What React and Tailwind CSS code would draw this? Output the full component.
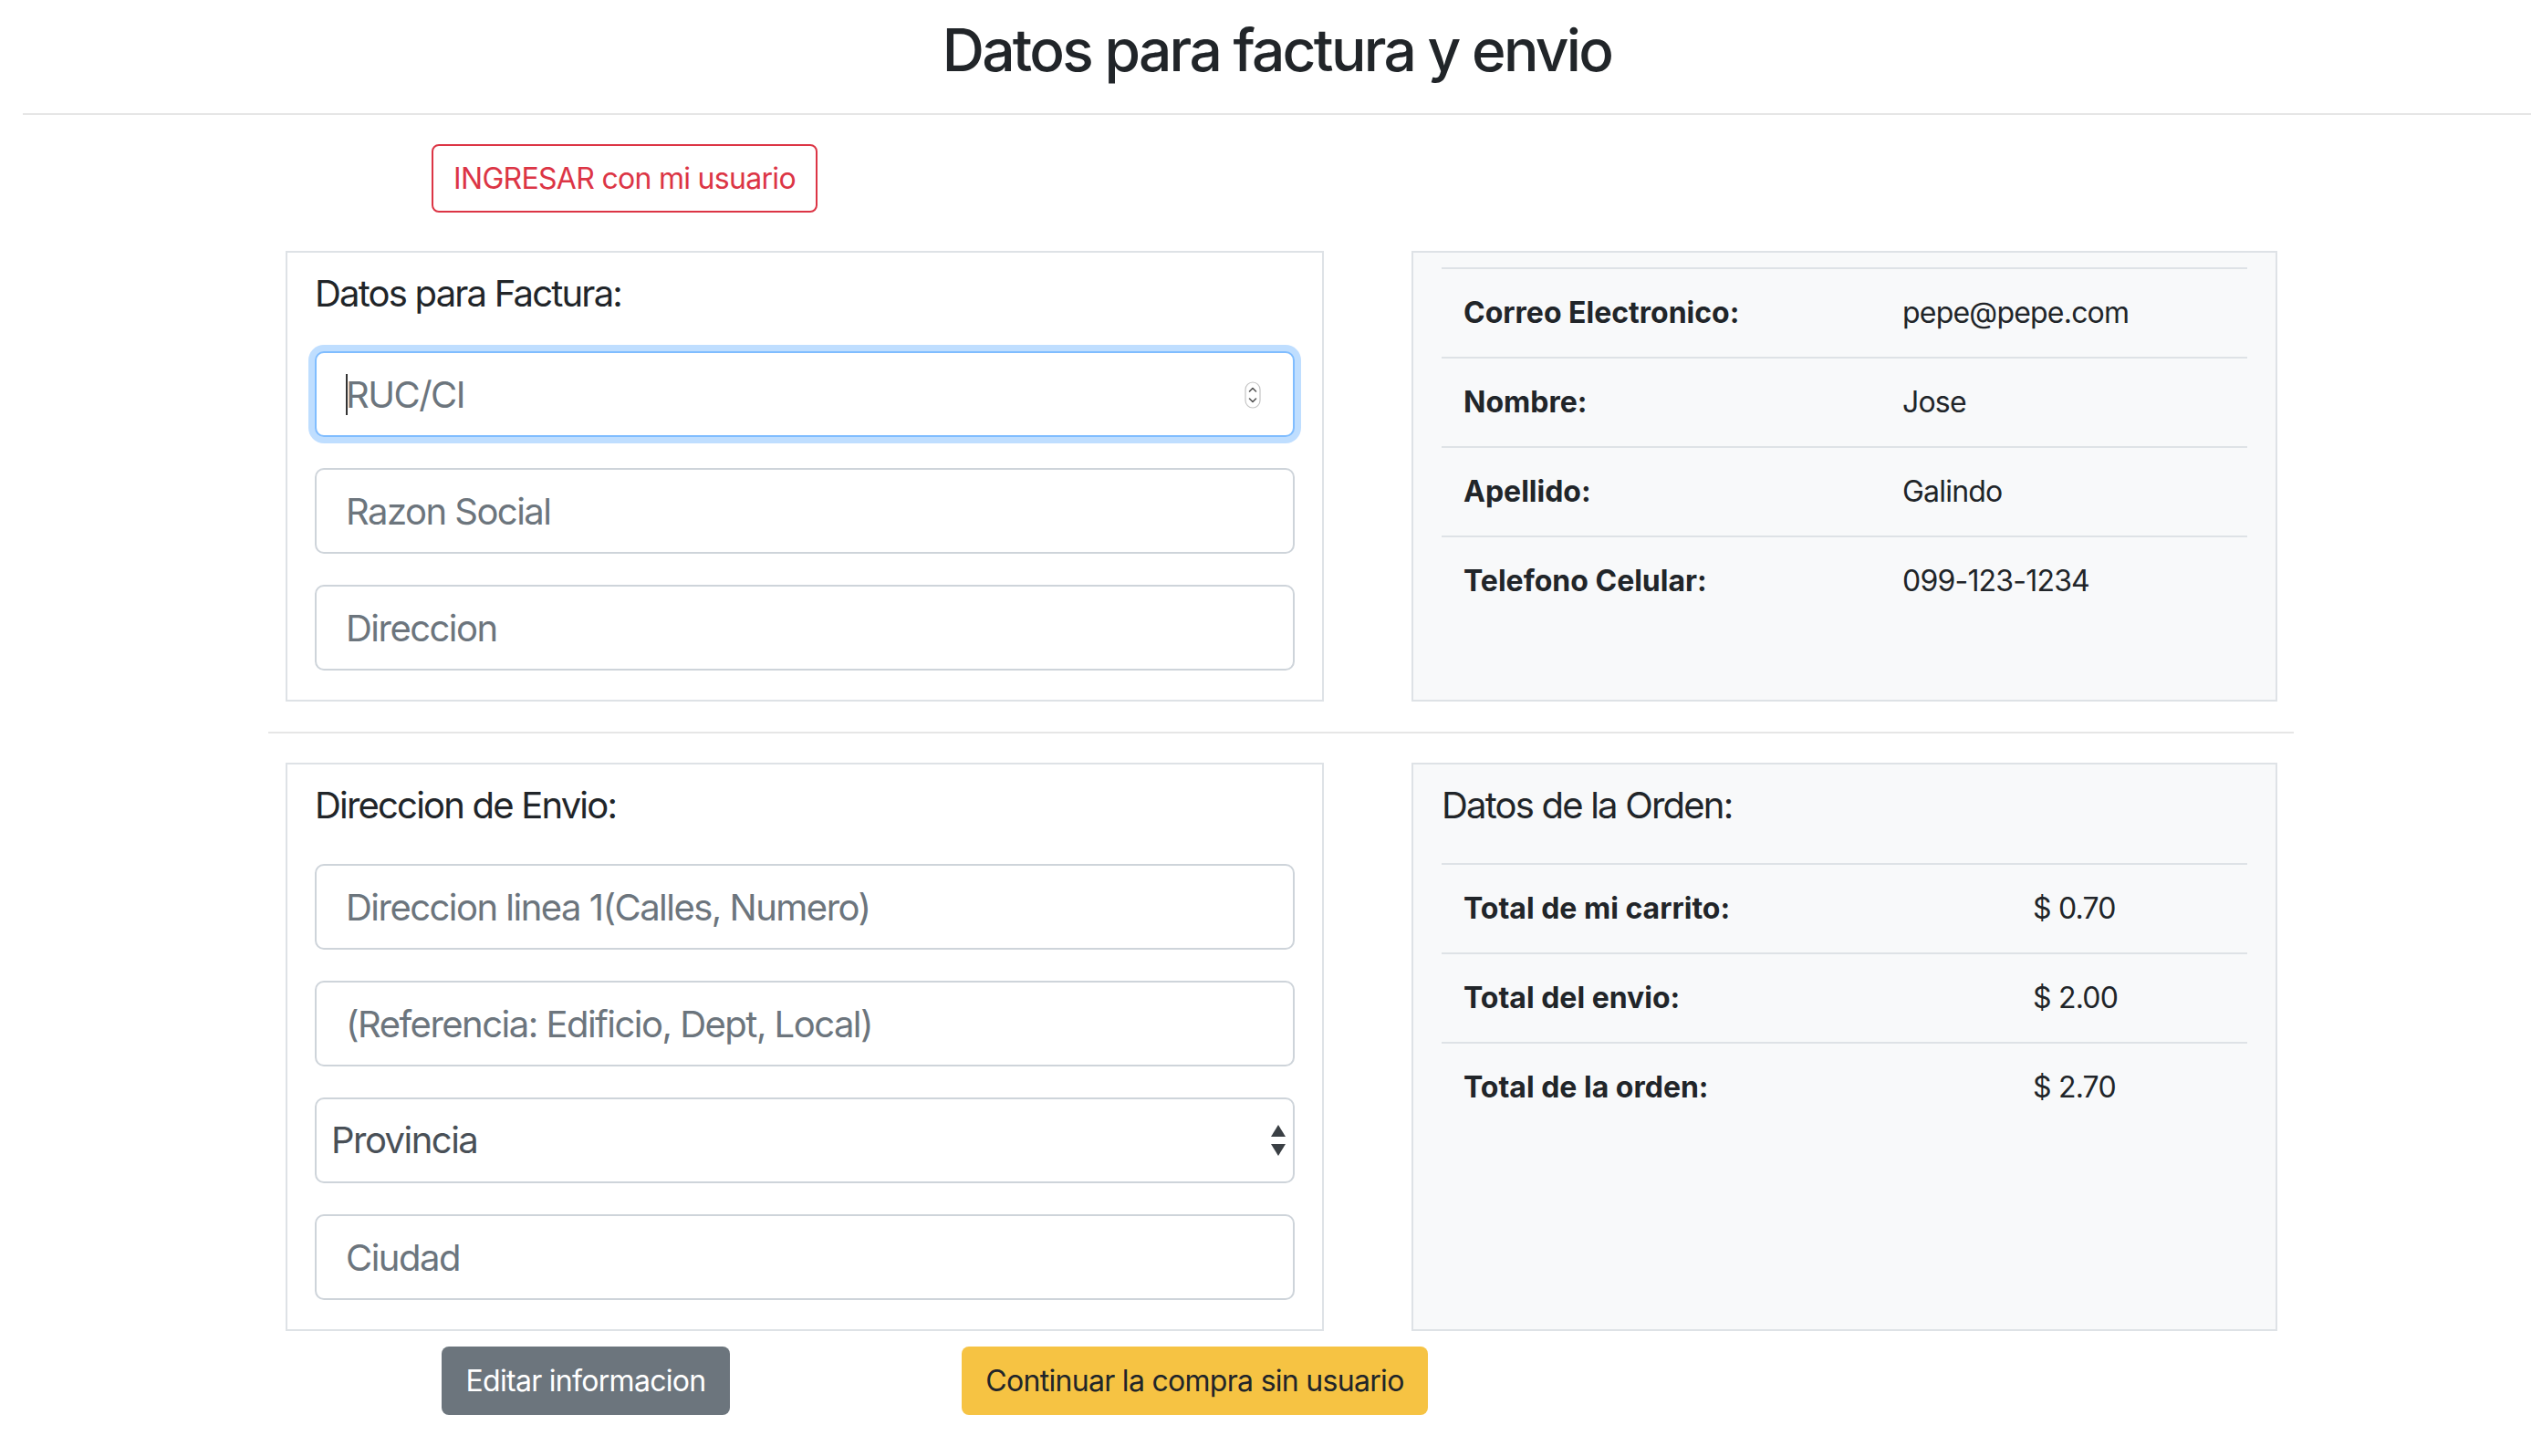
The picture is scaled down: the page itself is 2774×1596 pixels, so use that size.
import React from "react";

const facturaFields = ["Razon Social", "Direccion"];
const envioFields = ["Direccion linea 1(Calles, Numero)", "(Referencia: Edificio, Dept, Local)"];

const userInfo = [
  ["Correo Electronico:", "pepe@pepe.com"],
  ["Nombre:", "Jose"],
  ["Apellido:", "Galindo"],
  ["Telefono Celular:", "099-123-1234"],
];

const orderInfo = [
  ["Total de mi carrito:", "$ 0.70"],
  ["Total del envio:", "$ 2.00"],
  ["Total de la orden:", "$ 2.70"],
];

const inputCls =
  "block w-full h-[94px] rounded-[10px] border-2 border-[#ced4da] bg-white px-[32px] text-[40px] tracking-[-0.038em] text-[#495057] placeholder:text-[#6c757d] outline-none";

function Spinner() {
  return (
    <svg width="18" height="30" viewBox="0 0 18 30" className="absolute right-[37px] top-[33px]">
      <rect x="1" y="1" width="16" height="28" rx="8" fill="#fff" stroke="#c4c4c4" strokeWidth="1.2" />
      <path d="M5.5 11 L9 7.5 L12.5 11" fill="none" stroke="#555" strokeWidth="1.6" strokeLinecap="round" strokeLinejoin="round" />
      <path d="M5.5 19 L9 22.5 L12.5 19" fill="none" stroke="#555" strokeWidth="1.6" strokeLinecap="round" strokeLinejoin="round" />
    </svg>
  );
}

function SelectArrows() {
  return (
    <svg width="18" height="36" viewBox="0 0 18 36" className="pointer-events-none absolute right-[9px] top-[29px]">
      <path d="M9 1 L17 14 L1 14 Z" fill="#3a3f44" />
      <path d="M9 35 L17 22 L1 22 Z" fill="#3a3f44" />
    </svg>
  );
}

function InfoTable({ rows, labelWidth }) {
  return (
    <table className="w-full border-collapse text-[32px] leading-[48px]">
      <tbody>
        {rows.map(([label, value]) => (
          <tr key={label} className="border-t-2 border-[#dee2e6]">
            <td className="p-[24px] font-bold" style={{ width: labelWidth }}>
              {label}
            </td>
            <td className="p-[24px] tracking-[-0.025em]">{value}</td>
          </tr>
        ))}
      </tbody>
    </table>
  );
}

export default function App() {
  return (
    <div className="min-h-screen bg-white text-[#212529] font-['Inter','Liberation_Sans',sans-serif]">
      <div className="pl-[25px]">
        <h2 className="pt-[16px] text-center text-[64px] leading-[77px] font-medium tracking-[-0.042em]">
          Datos para factura y envio
        </h2>
        <div className="mt-[31px] h-[2px] bg-[#e6e6e6]" />
      </div>

      <div className="mt-[32px] pl-[473px]">
        <button className="h-[75px] w-[423px] rounded-[8px] border-2 border-[#dc3545] text-[32px] tracking-[-0.022em] text-[#dc3545]">
          INGRESAR con mi usuario
        </button>
      </div>

      <div className="mt-[42px] flex gap-[96px] pl-[313px]">
        <div className="w-[1138px] border-2 border-[#dee2e6] bg-white px-[30px] pt-[21px] pb-[32px]">
          <div className="text-[40px] leading-[48px] tracking-[-0.045em]">Datos para Factura:</div>
          <div className="mt-[39px] flex flex-col gap-[34px]">
            <div className="relative">
              <input
                className="block w-full h-[94px] rounded-[10px] border-2 border-[#80bdff] bg-white px-[32px] text-[40px] tracking-[-0.038em] text-[#495057] placeholder:text-[#6c757d] outline-none shadow-[0_0_0_7px_rgba(0,123,255,0.25)]"
                placeholder="RUC/CI"
              />
              <span className="absolute left-[34px] top-[25px] h-[45px] w-[2px] bg-[#333]" />
              <Spinner />
            </div>
            {facturaFields.map((f) => (
              <input key={f} className={inputCls} placeholder={f} />
            ))}
          </div>
        </div>

        <div className="w-[949px] border-2 border-[#dee2e6] bg-[#f8f9fa] px-[31px] pt-[16px]">
          <InfoTable rows={userInfo} labelWidth="481px" />
        </div>
      </div>

      <div className="mt-[33px] ml-[294px] h-[2px] w-[2220px] bg-[#e6e6e6]" />

      <div className="mt-[32px] flex gap-[96px] pl-[313px]">
        <div className="w-[1138px] border-2 border-[#dee2e6] bg-white px-[30px] pt-[21px] pb-[32px]">
          <div className="text-[40px] leading-[48px] tracking-[-0.045em]">Direccion de Envio:</div>
          <div className="mt-[40px] flex flex-col gap-[34px]">
            {envioFields.map((f) => (
              <input key={f} className={inputCls} placeholder={f} />
            ))}
            <div className="relative">
              <select className="block w-full h-[94px] appearance-none rounded-[10px] border-2 border-[#ced4da] bg-white px-[16px] text-[40px] tracking-[-0.038em] text-[#495057] outline-none">
                <option>Provincia</option>
              </select>
              <SelectArrows />
            </div>
            <input className={inputCls} placeholder="Ciudad" />
          </div>
        </div>

        <div className="w-[949px] border-2 border-[#dee2e6] bg-[#f8f9fa] px-[31px] pt-[21px]">
          <div className="text-[40px] leading-[48px] tracking-[-0.045em]">Datos de la Orden:</div>
          <div className="mt-[39px]">
            <InfoTable rows={orderInfo} labelWidth="624px" />
          </div>
        </div>
      </div>

      <div className="mt-[17px] flex pb-[40px]">
        <button className="ml-[484px] h-[75px] w-[316px] rounded-[8px] bg-[#6c757d] text-[32px] tracking-[-0.022em] text-white">
          Editar informacion
        </button>
        <button className="ml-[254px] h-[75px] w-[511px] rounded-[8px] bg-[#f6c343] text-[32px] tracking-[-0.022em] text-[#212529]">
          Continuar la compra sin usuario
        </button>
      </div>
    </div>
  );
}
